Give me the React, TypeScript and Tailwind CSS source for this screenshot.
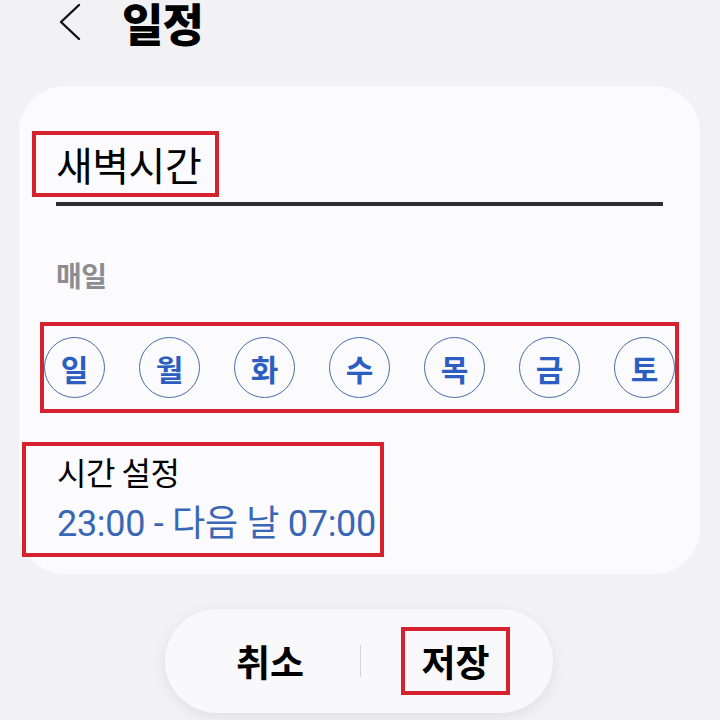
import { ReactNode } from "react"

const days = ["일", "월", "화", "수", "목", "금", "토"]

function Marked({ children, className = "" }: { children: ReactNode; className?: string }) {
  // red highlight frame around an element
  return <div className={`border-[4px] border-[#d6222e] ${className}`}>{children}</div>
}

export default function App() {
  return (
    <div
      className="w-[720px] h-[720px] overflow-hidden bg-[#f2f2f4] text-black"
      style={{ fontFamily: '"Noto Sans CJK KR", "Noto Sans", sans-serif' }}
    >
      {/* Header */}
      <div className="flex items-start h-[48px] pl-[59px]">
        <svg width="22" height="38" viewBox="0 0 22 38" fill="none" className="mt-[3px]">
          <path d="M20 2 L2 19 L20 36" stroke="#111" strokeWidth="2.4" strokeLinecap="round" strokeLinejoin="round" />
        </svg>
        <h1 className="ml-[41px] text-[45px] leading-none font-black tracking-[-1px]">일정</h1>
      </div>

      {/* Card */}
      <div className="ml-[19px] mt-[38px] w-[681px] h-[488px] rounded-[46px] bg-[#fbfbfd] pt-[45px]">
        <Marked className="ml-[13px] w-[187px] h-[66px] flex items-center pl-[20px]">
          <span className="text-[40px] leading-none tracking-[-0.5px]">새벽시간</span>
        </Marked>
        <div className="mx-[37px] mt-[5px] h-[4px] bg-[#2e2e30]" />

        <div className="ml-[37px] mt-[55px] text-[28px] leading-none font-bold text-[#8d8d91] tracking-[-0.5px]">
          매일
        </div>

        <Marked className="ml-[21px] mt-[33px] w-[639px] h-[91px] flex items-center justify-between">
          {days.map((d) => (
            <div
              key={d}
              className="w-[61px] h-[61px] rounded-full border-[1.5px] border-[#4a6ca6] flex items-center justify-center text-[30px] font-bold text-[#2b5ec0] leading-none"
            >
              {d}
            </div>
          ))}
        </Marked>

        <Marked className="ml-[3px] mt-[29px] w-[362px] h-[115px] pl-[31px] pt-[3px]">
          <div className="text-[32px] leading-[44px] tracking-[-0.5px]">시간 설정</div>
          <div
            className="text-[36px] leading-[44px] text-[#3a67b5] tracking-[-0.3px] mt-[9px]"
            style={{ fontFamily: 'Roboto, "Noto Sans CJK KR", sans-serif' }}
          >
            23:00 - 다음 날 07:00
          </div>
        </Marked>
      </div>

      {/* Bottom buttons */}
      <div className="ml-[165px] mt-[35px] w-[388px] h-[104px] rounded-full bg-[#f9f9fb] shadow-[0_4px_14px_rgba(0,0,0,0.08)] flex items-center">
        <div className="w-[195px] flex justify-end pr-[56px]">
          <span className="text-[37px] font-bold leading-none">취소</span>
        </div>
        <div className="w-[1px] h-[32px] bg-[#d6d6d8]" />
        <div className="flex-1 flex justify-start pl-[40px]">
          <Marked className="w-[109px] h-[68px] flex items-center justify-center">
            <span className="text-[37px] font-bold leading-none">저장</span>
          </Marked>
        </div>
      </div>
    </div>
  )
}
